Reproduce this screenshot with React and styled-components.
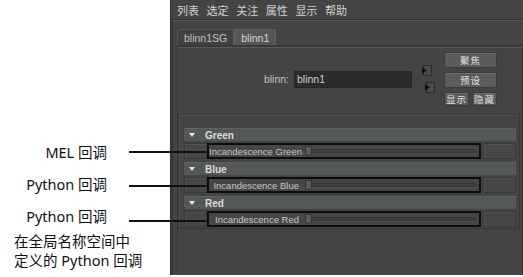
import React from "react";
import styled, { createGlobalStyle } from "styled-components";

const Global = createGlobalStyle`
  html, body { margin: 0; padding: 0; background: #ffffff; }
  body { font-family: "Liberation Sans", "Noto Sans CJK SC", sans-serif; }
  * { box-sizing: border-box; }
`;

const Page = styled.div`
  position: relative;
  width: 523px;
  height: 277px;
  display: flex;
  background: #ffffff;
  overflow: hidden;
`;

const Notes = styled.div`
  width: 170px;
  flex: none;
  padding-top: 143px;
  display: flex;
  flex-direction: column;
  color: #111;
  font-family: "Noto Sans", "Noto Sans CJK SC", sans-serif;
  font-size: 14.5px;
`;

const Note = styled.div`
  height: ${(p) => (p.$left ? 18.5 : 19)}px;
  line-height: ${(p) => (p.$left ? 18.5 : 19)}px;
  white-space: nowrap;
  margin-top: ${(p) => p.$gap || 0}px;
  text-align: ${(p) => (p.$left ? "left" : "right")};
  padding-right: ${(p) => (p.$left ? 0 : 63)}px;
  padding-left: ${(p) => (p.$left ? 14 : 0)}px;
`;

const Leader = styled.div`
  position: absolute;
  left: 129px;
  width: 77px;
  height: 2px;
  background: #111;
  top: ${(p) => p.$top}px;
`;

const Panel = styled.div`
  flex: 1;
  height: 275px;
  background: #444444;
  display: flex;
  flex-direction: column;
  border-left: 1px solid #2f2f2f;
  font-size: 10px;
  color: #c8c8c8;
`;

const MenuBar = styled.div`
  height: 20px;
  flex: none;
  display: flex;
  align-items: center;
  gap: 7.6px;
  padding-left: 6px;
  font-family: "Noto Sans CJK SC", sans-serif;
  font-size: 11px;
  color: #d2d2d2;
  border-bottom: 1px solid #353535;
  box-shadow: 0 1px 0 #555;
`;

const MenuItem = styled.span`
  line-height: 20px;
`;

const Body = styled.div`
  flex: 1;
  display: flex;
  flex-direction: column;
  padding: 9px 2px 0 4px;
  border-left: 2px solid #3a3a3a;
`;

const Tabs = styled.div`
  display: flex;
  height: 16px;
  flex: none;
`;

const Tab = styled.div`
  height: 16px;
  padding: 0 ${(p) => (p.$active ? 6 : 6)}px;
  display: flex;
  align-items: center;
  font-size: 10.5px;
  color: ${(p) => (p.$active ? "#d8d8d8" : "#c4c4c4")};
  background: ${(p) => (p.$active ? "#555555" : "#414141")};
  border: 1px solid ${(p) => (p.$active ? "#626262" : "#565656")};
  border-bottom: none;
  border-radius: 2px 2px 0 0;
`;

const TabContent = styled.div`
  flex: 1;
  display: flex;
  flex-direction: column;
  border-top: 2px solid #383838;
  border-left: 1px solid #373737;
  border-right: 1px solid #373737;
  box-shadow: inset 0 1px 0 #5a5a5a;
  padding-top: 5px;
`;

const NameArea = styled.div`
  display: flex;
  align-items: center;
  justify-content: flex-end;
  padding-right: 25px;
`;

const NameLabel = styled.span`
  font-size: 10.5px;
  color: #c2c2c2;
  margin-right: 5px;
`;

const NameInput = styled.div`
  width: 118px;
  height: 17px;
  background: #2b2b2b;
  border: 1px solid #262626;
  color: #cfcfcf;
  font-size: 10.5px;
  display: flex;
  align-items: center;
  padding-left: 2px;
  margin-right: 9px;
`;

const IconCol = styled.div`
  display: flex;
  flex-direction: column;
  gap: 6px;
  width: 14px;
  margin-right: 9px;
`;

const PortIcon = styled.svg`
  display: block;
  width: 11px;
  height: 11px;
  margin-left: ${(p) => p.$shift || 0}px;
`;

const ButtonCol = styled.div`
  width: 53px;
  display: flex;
  flex-direction: column;
  gap: 4px;
`;

const ButtonRow = styled.div`
  display: flex;
  gap: 3px;
`;

const Btn = styled.div`
  flex: 1;
  height: 14px;
  background: #5b5b5b;
  border: 1px solid #3a3a3a;
  box-shadow: inset 0 1px 0 #6c6c6c;
  border-radius: 2px;
  display: flex;
  align-items: center;
  justify-content: center;
  font-family: "Noto Sans CJK SC", sans-serif;
  font-size: 9.5px;
  color: #e2e2e2;
  letter-spacing: 1px;
`;

const Frame = styled.div`
  margin: 8px 2px 0 0;
  border: 1px solid #363636;
  box-shadow: inset 1px 1px 0 #545454;
  padding: 13px 3px 1px 5px;
  display: flex;
  flex-direction: column;
`;

const Header = styled.div`
  height: 13px;
  background: #555858;
  border-top: 1px solid #5f6262;
  display: flex;
  align-items: center;
  margin-top: ${(p) => (p.$first ? 0 : 3)}px;
  font-size: 10px;
  font-weight: bold;
  color: #dcdcdc;
`;

const Arrow = styled.span`
  width: 0;
  height: 0;
  margin-left: 5px;
  margin-right: 10px;
  border-left: 3px solid transparent;
  border-right: 3px solid transparent;
  border-top: 4px solid #e8e8e8;
`;

const Row = styled.div`
  height: 16px;
  margin-top: 2px;
  display: flex;
`;

const Cell = styled.div`
  width: ${(p) => p.$w}px;
  flex: none;
  background: #474747;
  border: 1px solid #3a3a3a;
  box-shadow: inset 1px 1px 0 #525252;
  margin-left: ${(p) => p.$ml || 0}px;
`;

const AttrBox = styled.div`
  width: 274px;
  flex: none;
  border: 2px solid #0d0d0d;
  background: #464646;
  display: flex;
  align-items: center;
`;

const AttrLabel = styled.span`
  width: 90px;
  text-align: right;
  font-size: 9.5px;
  color: #c6c6c6;
  white-space: nowrap;
  margin-right: 6px;
`;

const Thumb = styled.div`
  width: 7px;
  height: 10px;
  background: #5c5c5c;
  border: 1px solid #333;
  border-radius: 1px 1px 3px 3px;
  flex: none;
`;

const Track = styled.div`
  flex: 1;
  height: 4px;
  margin-right: 3px;
  background: #3e3e3e;
  border: 1px solid #353535;
  box-shadow: 0 1px 0 #505050;
`;

const PortGlyph = ({ shift }) => (
  <PortIcon $shift={shift} viewBox="0 0 11 11">
    <rect x="2.5" y="0.5" width="8" height="10" fill="#4a4a4a" stroke="#2a2a2a" />
    <polygon points="1,2.5 6,5.5 1,8.5" fill="#0a0a0a" />
  </PortIcon>
);

const sections = [
  { name: "Green", attr: "Incandescence Green" },
  { name: "Blue", attr: "Incandescence Blue" },
  { name: "Red", attr: "Incandescence Red" },
];

export default function App() {
  return (
    <>
      <Global />
      <Page>
        <Notes>
          <Note>MEL 回调</Note>
          <Note $gap={13}>Python 回调</Note>
          <Note $gap={13}>Python 回调</Note>
          <Note $left $gap={6}>在全局名称空间中</Note>
          <Note $left>定义的 Python 回调</Note>
        </Notes>
        <Panel>
          <MenuBar>
            {["列表", "选定", "关注", "属性", "显示", "帮助"].map((m) => (
              <MenuItem key={m}>{m}</MenuItem>
            ))}
          </MenuBar>
          <Body>
            <Tabs>
              <Tab>blinn1SG</Tab>
              <Tab $active>blinn1</Tab>
            </Tabs>
            <TabContent>
              <NameArea>
                <NameLabel>blinn:</NameLabel>
                <NameInput>blinn1</NameInput>
                <IconCol>
                  <PortGlyph shift={0} />
                  <PortGlyph shift={3} />
                </IconCol>
                <ButtonCol>
                  <Btn>聚焦</Btn>
                  <Btn>预设</Btn>
                  <ButtonRow>
                    <Btn>显示</Btn>
                    <Btn>隐藏</Btn>
                  </ButtonRow>
                </ButtonCol>
              </NameArea>
              <Frame>
                {sections.map((s, i) => (
                  <React.Fragment key={s.name}>
                    <Header $first={i === 0}>
                      <Arrow />
                      {s.name}
                    </Header>
                    <Row>
                      <Cell $w={23} />
                      <AttrBox>
                        <AttrLabel>{s.attr}</AttrLabel>
                        <Thumb />
                        <Track />
                      </AttrBox>
                      <Cell $w={33} $ml={2} />
                    </Row>
                  </React.Fragment>
                ))}
              </Frame>
            </TabContent>
          </Body>
        </Panel>
        <Leader $top={151} />
        <Leader $top={185} />
        <Leader $top={220} />
      </Page>
    </>
  );
}
